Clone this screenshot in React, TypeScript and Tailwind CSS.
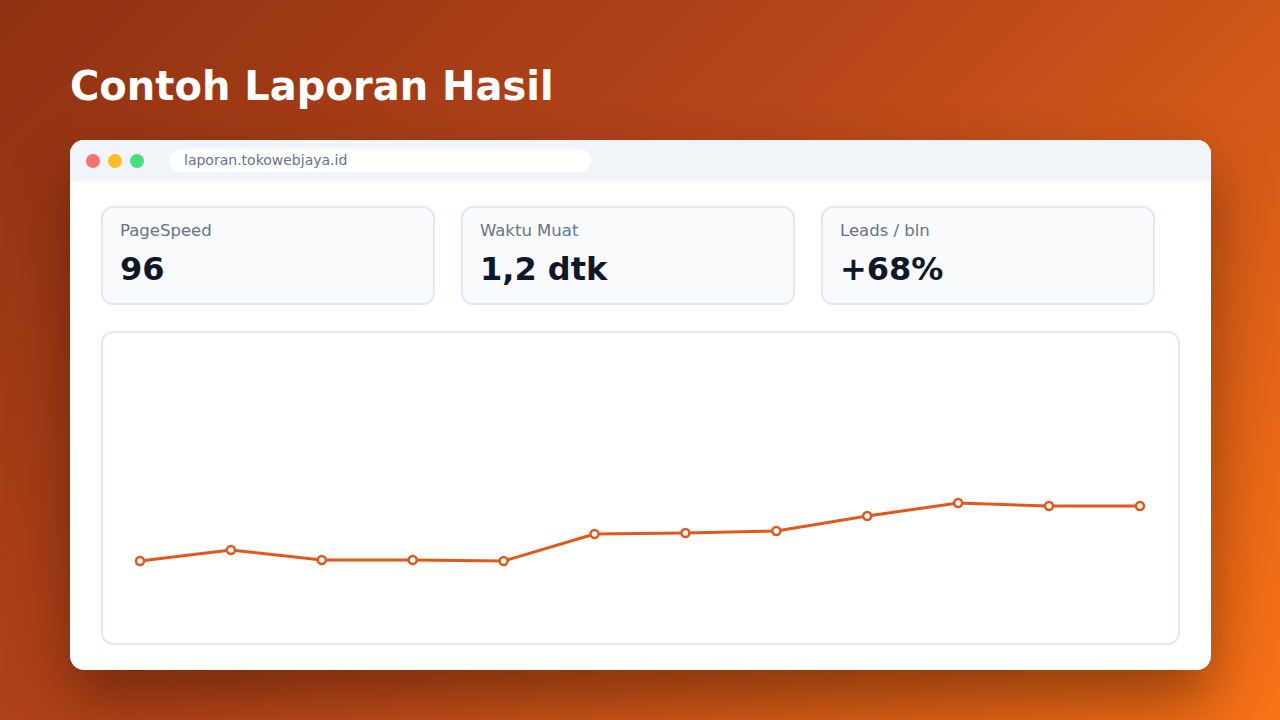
const STATS = [
  { label: 'PageSpeed', value: '96' },
  { label: 'Waktu Muat', value: '1,2 dtk' },
  { label: 'Leads / bln', value: '+68%' },
]

// y positions (page px) of the monthly points
const POINTS = [561, 550, 560, 560, 561, 534, 533, 531, 516, 503, 506, 506]

function Chart() {
  // svg origin sits at the chart box's inner top-left (103, 333)
  const pts = POINTS.map((y, i) => ({ x: 37 + i * 90.9, y: y - 333 }))
  const d = pts.map((p, i) => `${i === 0 ? 'M' : 'L'}${p.x.toFixed(1)} ${p.y}`).join(' ')
  return (
    <svg width="1075" height="310" viewBox="0 0 1075 310" className="block">
      <path d={d} fill="none" stroke="#e0591a" strokeWidth="3" strokeLinejoin="round" />
      {pts.map((p, i) => (
        <circle key={i} cx={p.x} cy={p.y} r="4" fill="#fff" stroke="#e0591a" strokeWidth="2.5" />
      ))}
    </svg>
  )
}

export default function App() {
  return (
    <div
      className="h-[720px] w-[1280px] overflow-hidden bg-[linear-gradient(135deg,#8f3112_0%,#b8461a_45%,#f97316_100%)] pl-[70px] pt-[66px]"
      style={{ fontFamily: '"DejaVu Sans", sans-serif' }}
    >
      <h1 className="text-[40px] font-bold leading-none text-white">Contoh Laporan Hasil</h1>

      <div className="mt-[34px] h-[530px] w-[1141px] overflow-hidden rounded-[14px] bg-white shadow-[0_30px_60px_rgba(40,10,0,0.45)]">
        <div className="flex h-[41px] items-center bg-[#f1f5f9] pl-4">
          <div className="flex gap-2">
            <span className="h-[14px] w-[14px] rounded-full bg-[#f87171]" />
            <span className="h-[14px] w-[14px] rounded-full bg-[#fbbf24]" />
            <span className="h-[14px] w-[14px] rounded-full bg-[#4ade80]" />
          </div>
          <div className="ml-[26px] flex h-[23px] w-[421px] items-center rounded-full bg-white px-[14px] text-[14px] text-[#64748b]">
            laporan.tokowebjaya.id
          </div>
        </div>

        <div className="pl-[31px] pr-[31px] pt-[25px]">
          <div className="flex gap-[26px]">
            {STATS.map((s) => (
              <div
                key={s.label}
                className="h-[99px] w-[334px] rounded-[12px] border-2 border-[#e2e8f0] bg-[#f8fafc] px-[17px] pt-[15px]"
              >
                <div className="text-[16.5px] leading-none text-[#64748b]">{s.label}</div>
                <div className="mt-[13px] text-[32px] font-bold leading-none text-[#0f172a]">{s.value}</div>
              </div>
            ))}
          </div>

          <div className="mt-[26px] h-[314px] w-[1079px] rounded-[12px] border-2 border-[#e2e8f0] bg-white">
            <Chart />
          </div>
        </div>
      </div>
    </div>
  )
}
